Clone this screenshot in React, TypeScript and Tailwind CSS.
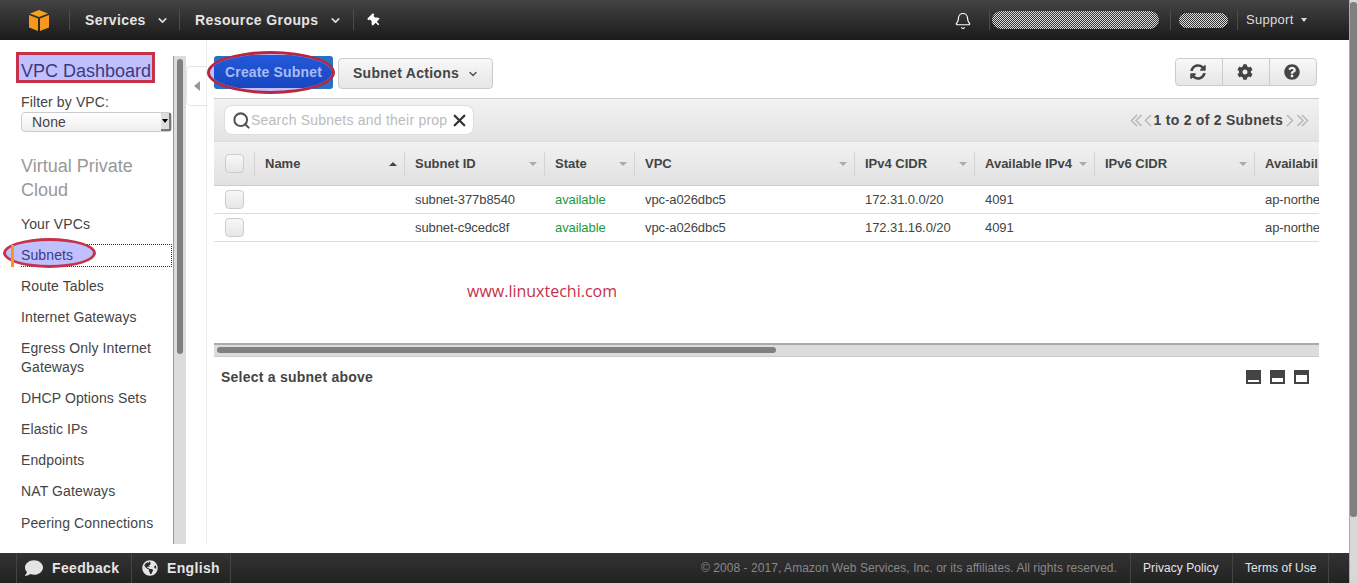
import { Bell, ChevronDown, Search, X } from "lucide-react";
import { FaCog, FaComment, FaGlobeAmericas, FaQuestionCircle, FaSyncAlt, FaThumbtack } from "react-icons/fa";

const navItems = [
  { label: "Your VPCs" },
  { label: "Subnets", active: true },
  { label: "Route Tables" },
  { label: "Internet Gateways" },
  { label: "Egress Only Internet Gateways" },
  { label: "DHCP Options Sets" },
  { label: "Elastic IPs" },
  { label: "Endpoints" },
  { label: "NAT Gateways" },
  { label: "Peering Connections", last: true },
];

const columns = [
  { label: "Name", width: "w-[150px]", up: true },
  { label: "Subnet ID", width: "w-[140px]" },
  { label: "State", width: "w-[90px]" },
  { label: "VPC", width: "w-[220px]" },
  { label: "IPv4 CIDR", width: "w-[120px]" },
  { label: "Available IPv4", width: "w-[120px]" },
  { label: "IPv6 CIDR", width: "w-[160px]" },
  { label: "Availabil", width: "w-[65px]", noArrow: true },
];

const rows = [
  ["", "subnet-377b8540", "available", "vpc-a026dbc5", "172.31.0.0/20", "4091", "", "ap-northe"],
  ["", "subnet-c9cedc8f", "available", "vpc-a026dbc5", "172.31.16.0/20", "4091", "", "ap-northe"],
];

function CheckBox() {
  return <div className="h-[19px] w-[19px] rounded-[4px] border border-[#ccc] bg-gradient-to-b from-[#f8f8f8] to-[#e6e6e6]" />;
}

function AwsLogo() {
  return (
    <svg width="22" height="21" viewBox="0 0 22 21">
      <path d="M11 0 L20 3.5 L11 7 L2 3.5 Z" fill="#f7a11d" />
      <path d="M1 5 L10 8.5 V21 L1 17.5 Z" fill="#f7981d" />
      <path d="M21 5 L12 8.5 V21 L21 17.5 Z" fill="#f7981d" />
    </svg>
  );
}

function Redacted({ className }: { className: string }) {
  return <div className={`rounded-full bg-[repeating-conic-gradient(#ddd_0_25%,#333_0_50%)] bg-size-[2px_2px] ${className}`} />;
}

// pager arrows, the double ones are just two of the same stroke
function PagerArrow({ double, right }: { double?: boolean; right?: boolean }) {
  return (
    <svg width={double ? 12 : 8} height="13" viewBox={double ? "0 0 12 13" : "0 0 8 13"} className={right ? "rotate-180" : ""} fill="none" stroke="#bbb" strokeWidth="1.6">
      <path d="M7 1 L1.5 6.5 L7 12" />
      {double && <path d="M11.5 1 L6 6.5 L11.5 12" />}
    </svg>
  );
}

function Header() {
  return (
    <header className="flex h-10 shrink-0 items-center bg-gradient-to-b from-[#444] to-[#1b1b1b] text-[14px] font-bold tracking-[0.4px] text-[#e4e4e4]">
      <div className="flex w-[69px] justify-end pr-[19px]">
        <AwsLogo />
      </div>
      <div className="flex h-[20px] w-[110px] items-center border-l border-[#4d4d4d] pl-[15px]">
        Services
        <ChevronDown className="ml-[10px] h-[13px] w-[13px] text-[#ddd]" strokeWidth={3} />
      </div>
      <div className="flex h-[20px] w-[174px] items-center border-l border-[#4d4d4d] pl-[15px]">
        Resource Groups
        <ChevronDown className="ml-[11px] h-[13px] w-[13px] text-[#ddd]" strokeWidth={3} />
      </div>
      <div className="flex h-[20px] items-center border-l border-[#4d4d4d] pl-[14px]">
        <FaThumbtack className="h-[13px] w-[13px] -rotate-45 text-white" />
      </div>
      <div className="ml-auto flex items-center">
        <Bell className="mr-[17px] mt-[1px] h-[18px] w-[18px] text-white" strokeWidth={1.6} />
        <div className="flex h-[20px] w-[181px] items-center border-l border-[#4d4d4d] pl-[2px]">
          <Redacted className="h-[18px] w-[167px]" />
        </div>
        <div className="flex h-[20px] w-[67px] items-center border-l border-[#4d4d4d] pl-[8px]">
          <Redacted className="h-[15px] w-[49px]" />
        </div>
        <div className="flex h-[20px] w-[112px] items-center border-l border-[#4d4d4d] pl-[8px] text-[13px] font-normal tracking-[0.3px] text-[#ddd]">
          Support
          <span className="ml-[7px] h-0 w-0 border-x-[3px] border-t-[4px] border-x-transparent border-t-[#ddd]" />
        </div>
      </div>
    </header>
  );
}

function Sidebar() {
  return (
    <aside className="w-[173px] shrink-0 pl-[21px] pt-[12px] text-[14px] tracking-[0.12px] text-[#444]">
      <div className="relative h-[31px]">
        <div className="absolute left-[-5px] top-0 h-[31px] w-[139px] border-[3px] border-[#c5324a] bg-[#c0c0ff]" />
        <h1 className="relative pt-[4px] text-[18px] leading-[31px] tracking-normal text-[#3c3a80]">VPC Dashboard</h1>
      </div>
      <div className="mt-[10px] leading-[18px]">Filter by VPC:</div>
      <div className="mt-[1px] flex h-[20px] w-[151px] items-center justify-between rounded-[4px] border border-[#ccc] bg-gradient-to-b from-[#fff] to-[#eee] pl-[10px]">
        None
        <span className="flex h-[18px] w-[10px] items-center justify-center border-r-2 border-b-2 border-[#777] bg-[#ddd]">
          <span className="h-0 w-0 border-x-[3px] border-t-[4px] border-x-transparent border-t-black" />
        </span>
      </div>
      <div className="mt-[22px] text-[18px] leading-[24px] tracking-normal text-[#999]">Virtual Private Cloud</div>
      <nav className="mt-[13px] flex flex-col gap-[12px] leading-[19px]">
        {navItems.map((item) =>
          item.active ? (
            <div key={item.label} className="relative -my-[2px] h-[23px] w-[151px] border border-dotted border-[#333] leading-[21px] text-[#3c3a80]">
              <span className="absolute left-[-19px] top-[-7px] h-[30px] w-[93px] rounded-[50%] border-[3px] border-[#c5324a] bg-[#c0c0ff]" />
              <span className="absolute left-[-11px] top-0 h-[22px] w-[3px] bg-[#f7981d]" />
              <span className="relative -ml-[1px]">{item.label}</span>
            </div>
          ) : (
            <div key={item.label} className={item.last ? "mt-[1px]" : ""}>
              {item.label}
            </div>
          ),
        )}
      </nav>
    </aside>
  );
}

function Toolbar() {
  return (
    <div className="flex h-[58px] shrink-0 items-start pr-[2px] pt-[16px]">
      <div className="relative h-[33px] w-[119px] rounded-[3px] bg-[#2b6fc4]">
        <div className="absolute left-[-7px] top-[-5px] h-[43px] w-[128px] overflow-hidden rounded-[50%] border-[3px] border-[#b5283f] bg-[#c0c0ff]">
          <div className="ml-[4px] mt-[1px] flex h-[33px] w-[125px] items-center bg-gradient-to-b from-[#2459da] to-[#1747c2] pl-[11px] pt-[1px] text-[14px] font-bold tracking-[0.16px] text-[#a9bcf5]">
            Create Subnet
          </div>
        </div>
      </div>
      <div className="ml-[5px] mt-[2px] flex h-[31px] w-[155px] items-center rounded-[4px] border border-[#ccc] bg-gradient-to-b from-[#f8f8f8] to-[#e6e6e6] pl-[14px] text-[14px] font-bold tracking-[0.28px] text-[#444]">
        Subnet Actions
        <ChevronDown className="ml-[8px] h-[12px] w-[12px] text-[#555]" strokeWidth={3} />
      </div>
      <div className="ml-auto mt-[2px] flex h-[28px] w-[142px] rounded-[4px] border border-[#ccc] bg-gradient-to-b from-[#f8f8f8] to-[#e6e6e6] text-[#444]">
        <div className="flex flex-1 items-center justify-center pr-[2px]">
          <FaSyncAlt className="h-[16px] w-[16px]" />
        </div>
        <div className="flex flex-1 items-center justify-center border-l border-[#ccc] pr-[2px]">
          <FaCog className="h-[16px] w-[16px]" />
        </div>
        <div className="flex flex-1 items-center justify-center border-l border-[#ccc] pr-[2px]">
          <FaQuestionCircle className="h-[16px] w-[16px]" />
        </div>
      </div>
    </div>
  );
}

function SearchBar() {
  return (
    <div className="flex h-[43px] shrink-0 items-center justify-between border-t border-[#ccc] bg-gradient-to-b from-[#f2f2f2] to-[#e3e3e3] pl-[10px] pr-[10px]">
      <div className="flex h-[30px] w-[250px] items-center rounded-[8px] border border-[#ddd] bg-white pl-[7px] text-[14px] text-[#bbb]">
        <Search className="h-[19px] w-[19px] shrink-0 text-[#555]" strokeWidth={2.6} />
        <span className="w-[199px] whitespace-nowrap tracking-[0.22px]">Search Subnets and their prop</span>
        <X className="h-[19px] w-[19px] shrink-0 text-[#333]" strokeWidth={3} />
      </div>
      <div className="flex items-center text-[14px] font-bold tracking-[0.26px] text-[#444]">
        <PagerArrow double />
        <span className="w-[2px]" />
        <PagerArrow />
        <span className="w-[2px]" />
        1 to 2 of 2 Subnets
        <span className="w-[3px]" />
        <PagerArrow right />
        <span className="w-[3px]" />
        <PagerArrow double right />
      </div>
    </div>
  );
}

function Table() {
  return (
    <div className="overflow-hidden">
      <div className="flex h-[45px] items-center border-y border-[#ddd] border-b-[#ccc] bg-gradient-to-b from-[#f2f2f2] to-[#e1e1e1] text-[13px] font-bold text-[#444]">
        <div className="flex w-[40px] shrink-0 justify-start pl-[11px]">
          <CheckBox />
        </div>
        {columns.map((col) => (
          <div key={col.label} className={`relative flex h-[24px] shrink-0 items-center whitespace-nowrap border-l border-[#d4d4d4] pl-[10px] ${col.width}`}>
            {col.label}
            {col.up ? (
              <span className="absolute right-[7px] top-[10px] h-0 w-0 border-x-[4px] border-b-[4px] border-x-transparent border-b-[#444]" />
            ) : col.noArrow ? null : (
              <span className="absolute right-[7px] top-[10px] h-0 w-0 border-x-[4px] border-t-[4px] border-x-transparent border-t-[#aaa]" />
            )}
          </div>
        ))}
      </div>
      {rows.map((row) => (
        <div key={row[1]} className="flex h-[28px] items-center border-b border-[#ddd] text-[13px] tracking-[-0.08px] text-[#444]">
          <div className="flex w-[40px] shrink-0 pl-[11px]">
            <CheckBox />
          </div>
          {row.map((cell, i) => (
            <div key={i} className={`shrink-0 whitespace-nowrap pl-[11px] ${columns[i].width} ${i === 2 ? "text-[#1d9a3c]" : ""}`}>
              {cell}
            </div>
          ))}
        </div>
      ))}
    </div>
  );
}

function DetailIcons() {
  return (
    <div className="flex gap-[9px]">
      <div className="flex h-[14px] w-[15px] items-end justify-center bg-[#444] pb-[2px]">
        <div className="h-[2px] w-[11px] bg-white" />
      </div>
      <div className="flex h-[14px] w-[15px] items-end justify-center bg-[#444] pb-[2px]">
        <div className="h-[4px] w-[11px] bg-white" />
      </div>
      <div className="flex h-[14px] w-[15px] items-end justify-center bg-[#444] pb-[2px]">
        <div className="h-[7px] w-[11px] bg-white" />
      </div>
    </div>
  );
}

function Main() {
  return (
    <main className="flex min-w-0 flex-1 flex-col pr-[30px]">
      <Toolbar />
      <SearchBar />
      <Table />
      <div className="h-[101px] shrink-0 pl-[253px] pt-[39px] font-['Open_Sans',sans-serif] text-[16px] leading-[20px] text-[#c5324a]">
        www.linuxtechi.com
      </div>
      <div className="h-[14px] shrink-0 border-t-2 border-[#aaa] border-b border-b-[#ccc] bg-[#dcdcdc] pl-[3px] pt-[2px]">
        <div className="h-[6px] w-[559px] rounded-full bg-[#808080]" />
      </div>
      <div className="flex items-center justify-between pl-[7px] pr-[10px] pt-[12px] text-[14px] font-bold leading-[16px] tracking-[0.24px] text-[#444]">
        Select a subnet above
        <DetailIcons />
      </div>
    </main>
  );
}

function Footer() {
  return (
    <footer className="flex h-[30px] shrink-0 items-center bg-gradient-to-b from-[#333] to-[#222] text-[14px] font-bold tracking-[0.35px] text-[#e4e4e4]">
      <div className="ml-[16px] flex h-full w-[115px] items-center gap-[9px] border-l border-[#444] pl-[8px]">
        <FaComment className="h-[18px] w-[18px]" />
        Feedback
      </div>
      <div className="flex h-full w-[99px] items-center gap-[9px] border-l border-[#444] pl-[10px]">
        <FaGlobeAmericas className="h-[16px] w-[16px]" />
        English
      </div>
      <div className="h-full border-l border-[#444]" />
      <div className="ml-auto pr-[13px] text-[12px] font-normal tracking-[0.06px] text-[#888]">© 2008 - 2017, Amazon Web Services, Inc. or its affiliates. All rights reserved.</div>
      <div className="flex h-full w-[102px] items-center border-l border-[#444] pl-[12px] text-[12px] font-normal tracking-[0.07px]">Privacy Policy</div>
      <div className="flex h-full w-[96px] items-center border-l border-[#444] pl-[12px] text-[12px] font-normal tracking-[0.07px]">Terms of Use</div>
      <div className="h-full w-[21px] border-l border-[#444]" />
    </footer>
  );
}

export default function App() {
  return (
    <div className="flex h-[583px] w-[1357px] overflow-hidden bg-white font-['Liberation_Sans',Arial,sans-serif]">
      <div className="flex min-w-0 flex-1 flex-col border-r border-[#aaa]">
        <Header />
        <div className="flex min-h-0 flex-1">
          <Sidebar />
          <div className="mt-[16px] mb-[9px] flex w-[13px] shrink-0 justify-center border-l border-[#999] bg-[#dcdcdc] py-[3px]">
            <div className="h-[295px] w-[6px] rounded-full bg-[#808080]" />
          </div>
          <div className="mb-[9px] w-[21px] shrink-0 border-r border-[#eee] pt-[26px]">
            <div className="flex h-[40px] w-[21px] items-center justify-center rounded-l-[5px] border border-r-0 border-[#e4e4e4]">
              <span className="h-0 w-0 border-y-[5px] border-r-[6px] border-y-transparent border-r-[#999]" />
            </div>
          </div>
          <div className="w-[7px] shrink-0" />
          <Main />
        </div>
        <Footer />
      </div>
      <div className="w-[7px] shrink-0 bg-[#d8d8d8] py-[2px]">
        <div className="h-[515px] w-[7px] rounded-[3px] bg-[#808080]" />
      </div>
    </div>
  );
}
